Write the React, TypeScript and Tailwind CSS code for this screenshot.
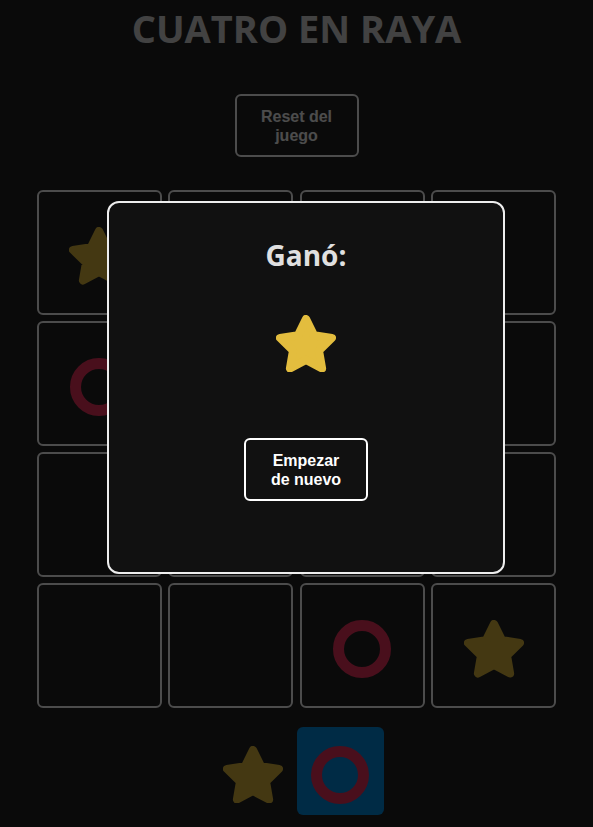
import React from "react";

type Piece = "star" | "ring" | null;

const STAR = "#e3bd3e";

function Star({ size = 60 }: { size?: number }) {
  return (
    <svg viewBox="6 6 88 84" width={size} height={(size * 84) / 88} aria-hidden>
      <polygon
        points="50,12 61.76,35.82 88.04,39.64 69.02,58.18 73.51,84.36 50,72 26.49,84.36 30.98,58.18 11.96,39.64 38.24,35.82"
        fill={STAR}
        stroke={STAR}
        strokeWidth={12}
        strokeLinejoin="round"
      />
    </svg>
  );
}

function Ring() {
  return <div className="w-[58px] h-[58px] rounded-full border-[11px] border-[#f5335f]" />;
}

const board: Piece[] = [
  "star", null, null, null,
  "ring", null, null, null,
  null, null, null, null,
  null, null, "ring", "star",
];

export default function App() {
  return (
    <div className="relative min-h-screen bg-[#242424] text-[#dedede]">
      <div className="flex flex-col items-center">
        <h1 className="pt-[4px] text-[38px] leading-[48px] font-bold text-[#dedede] [font-family:'Open_Sans',sans-serif]">
          CUATRO EN RAYA
        </h1>
        <button className="mt-[42px] w-[124px] h-[63px] rounded-[6px] border-2 border-white bg-transparent text-white text-[16px] leading-[19px] font-bold [font-family:'Liberation_Sans',Arial,sans-serif]">
          Reset del
          <br />
          juego
        </button>
        <div className="mt-[33px] grid grid-cols-[repeat(4,125px)] gap-x-[6.5px] gap-y-[6px]">
          {board.map((p, i) => (
            <div
              key={i}
              className="w-[125px] h-[125px] rounded-[6px] border-2 border-white flex items-center justify-center pt-[7px]"
            >
              {p === "star" && <Star />}
              {p === "ring" && <Ring />}
            </div>
          ))}
        </div>
        <div className="mt-[19px] flex">
          <div className="w-[87px] h-[88px] flex items-center justify-center pt-[7px]">
            <Star />
          </div>
          <div className="w-[87px] h-[88px] rounded-[6px] bg-[#008fe6] flex items-center justify-center pt-[7px]">
            <Ring />
          </div>
        </div>
      </div>

      <div className="fixed inset-0 bg-black/70">
        <div className="absolute left-[107px] top-[201px] w-[398px] h-[373px] rounded-[12px] border-2 border-[#eeeeee] bg-[#111111] flex flex-col items-center pt-[35px]">
          <h2 className="text-[28px] leading-[34px] font-bold text-[#e0e0e0] [font-family:'Open_Sans',sans-serif]">
            Ganó:
          </h2>
          <div className="mt-[43px]">
            <Star />
          </div>
          <button className="mt-[66px] w-[124px] h-[63px] rounded-[6px] border-2 border-white bg-transparent text-white text-[16px] leading-[19px] font-bold [font-family:'Liberation_Sans',Arial,sans-serif]">
            Empezar
            <br />
            de nuevo
          </button>
        </div>
      </div>
    </div>
  );
}
